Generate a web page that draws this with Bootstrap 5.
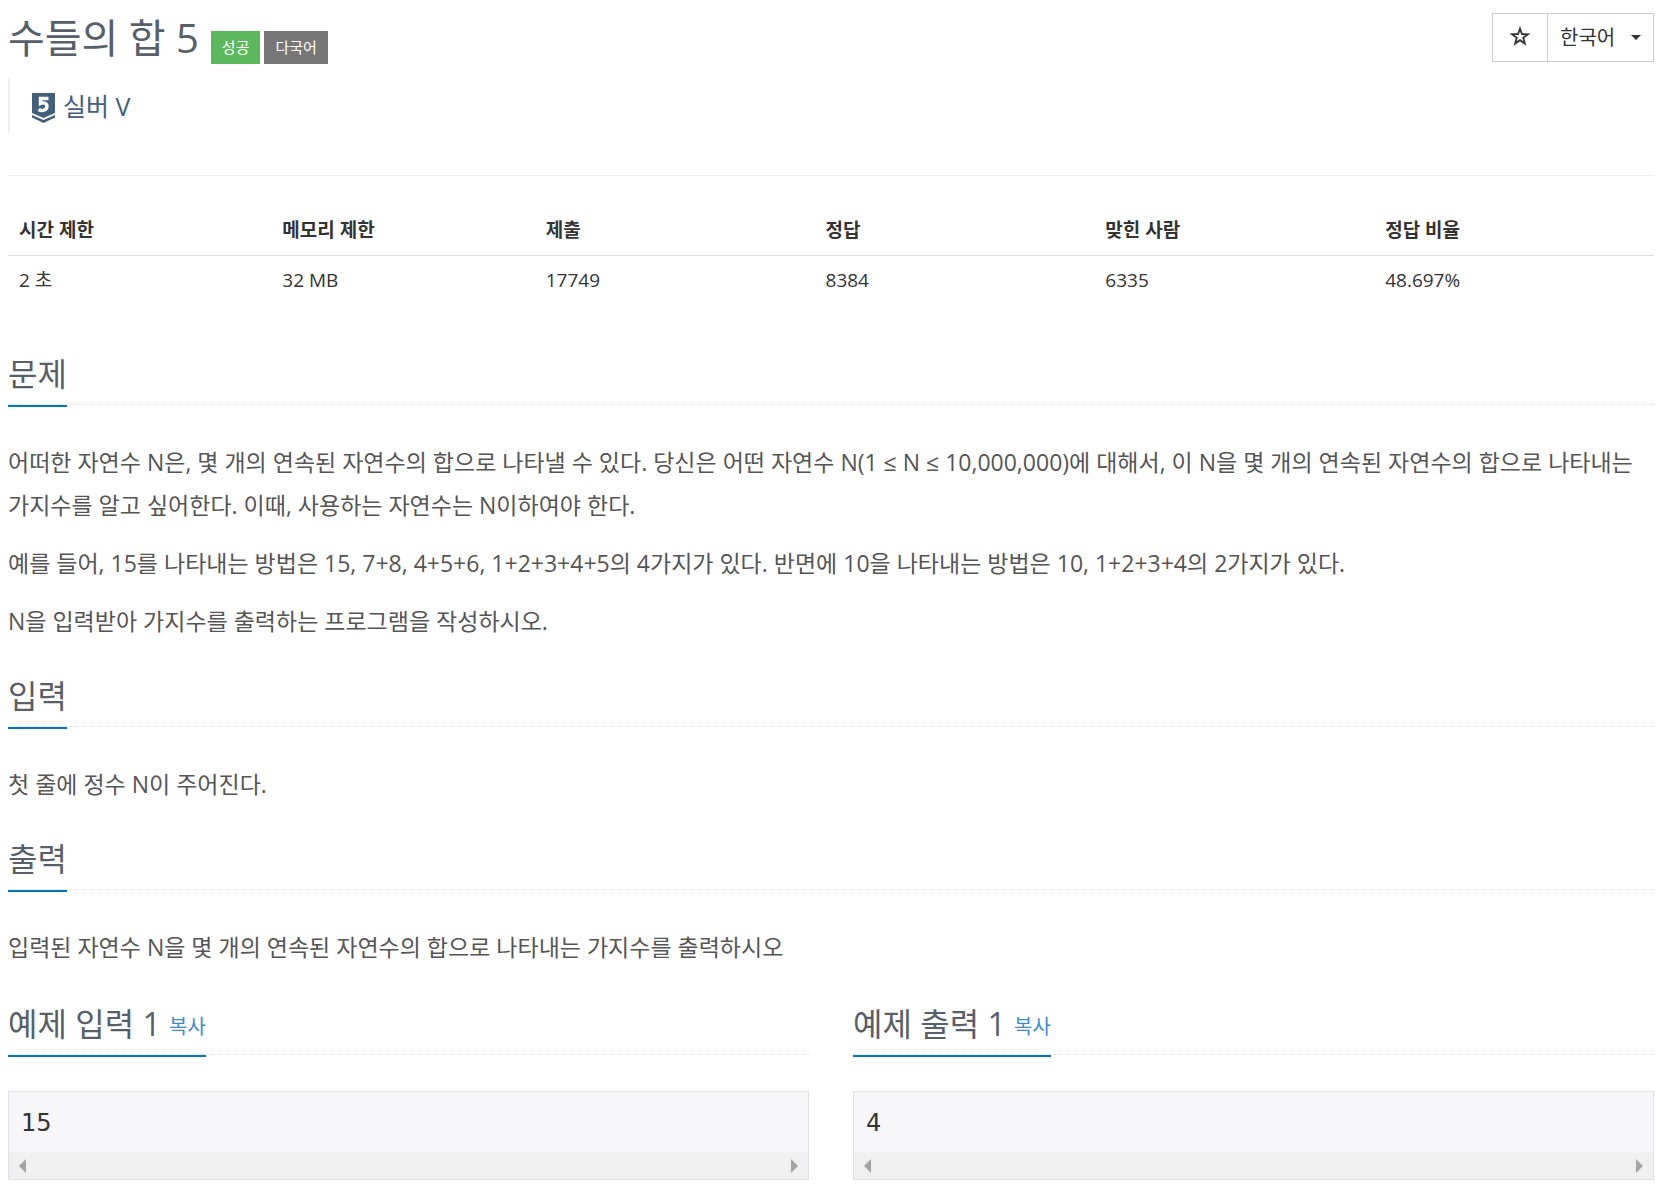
<!DOCTYPE html>
<html lang="ko">
<head>
<meta charset="utf-8">
<meta name="viewport" content="width=device-width, initial-scale=1">
<title>수들의 합 5</title>
<link href="https://cdn.jsdelivr.net/npm/bootstrap@5.3.0/dist/css/bootstrap.min.css" rel="stylesheet">
<style>
  body { font-family: "Open Sans", "Noto Sans CJK KR", sans-serif; font-size: 19px; line-height: 28px; color: #333; background: #fff; }
  .problem-page { padding: 10px 16px 8px 8px; }
  .problem-title { font-size: 40px; line-height: 56px; font-weight: 400; color: #585f69; }
  .label-list { margin: 0 0 2px 12px; }
  .problem-label { font-size: 15px; line-height: 33px; padding: 0 11px; color: #fff; }
  .label-success { background: #5cb85c; }
  .label-lang { background: #777; }
  .tool-group { margin-top: 3px; }
  .tool-btn { height: 49px; border: 1px solid #ccc; border-radius: 0; font-size: 20px; color: #333; padding: 0 12px; }
  .tool-btn:hover, .tool-btn:active { background: #e6e6e6; border-color: #adadad; }
  .lang-btn { width: 107px; }
  .tier-quote { border-left: 2px solid #eee; height: 55px; margin-top: 12px; padding-left: 22px; font-size: 25px; color: #435f7a; }
  .tier-quote a { color: inherit; }
  .title-rule { border-top: 1px solid #eee; opacity: 1; margin: 42px 0 30px; }
  .info-table { table-layout: fixed; color: #333; }
  .info-table th, .info-table td { padding: 11px; line-height: 27px; font-size: 19px; }
  .info-table th { border-bottom: 1px solid #ddd; }
  .info-table td { border: 0; }
  .w-limit { width: 16%; }
  .headline { border-bottom: 1px dotted #dfe3e8; margin-bottom: 36px; }
  .headline h2 { display: inline-block; font-size: 32px; line-height: 42px; font-weight: 400; color: #585f69; margin: 0 0 -3px; padding-bottom: 10px; border-bottom: 2px solid #0076c0; }
  .headline button { font-size: 20px; line-height: 28px; color: #428bca; }
  .problem-text p { font-size: 23px; line-height: 43px; color: #555; margin-bottom: 15px; }
  .problem-section { margin-bottom: 32px; }
  .sample-row { --bs-gutter-x: 44px; padding-top: 2px; }
  .sample-box { border: 1px solid #e0e0e7; background: #f7f7fa; }
  .sample-box pre { font-family: "DejaVu Sans", sans-serif; font-size: 24px; line-height: 32px; color: #333; padding: 15px 12px 13px; margin: 0; }
  .scroll-track { height: 27px; background: #f0f0f0; padding: 0 10px; }
</style>
<script src="https://cdn.jsdelivr.net/npm/bootstrap@5.3.0/dist/js/bootstrap.bundle.min.js"></script>
</head>
<body>
<main class="problem-page">
  <header>
    <div class="d-flex justify-content-between align-items-start">
      <div class="d-flex align-items-end">
        <h1 class="problem-title mb-0">수들의 합 5</h1>
        <div class="label-list d-flex gap-1">
          <span class="problem-label label-success">성공</span>
          <span class="problem-label label-lang">다국어</span>
        </div>
      </div>
      <div class="btn-group tool-group">
        <button type="button" class="btn tool-btn px-3" aria-label="즐겨찾기">
          <svg class="d-block mb-1" width="22" height="22" viewBox="0 0 22 22" fill="none" stroke="#333" stroke-width="1.8"><path d="M11 3.500L12.900 9L19 9.200L14.200 12.800L15.900 18.600L11 15.200L6.100 18.600L7.800 12.800L3 9.200L9.100 9Z"/></svg>
        </button>
        <button type="button" class="btn tool-btn lang-btn d-flex align-items-center justify-content-between" data-bs-toggle="dropdown">
          <span>한국어</span>
          <svg width="10" height="5" viewBox="0 0 10 5"><path d="M0 0H10L5 5Z" fill="#333"/></svg>
        </button>
        <ul class="dropdown-menu dropdown-menu-end"><li><a class="dropdown-item" href="#">한국어</a></li></ul>
      </div>
    </div>
    <div class="tier-quote d-flex align-items-center">
      <svg class="me-2 mt-1" width="23" height="30" viewBox="0 0 23 30"><path d="M0 0H23V20L11.500 25L0 20Z" fill="#435f7a"/><path d="M0 22L11.500 27L23 22V24.500L11.500 30L0 24.500Z" fill="#435f7a"/><path d="M16.500 5.500H8.500V10.500C10.500 9.500 15 9.500 15 13.300C15 17.600 9.500 18.300 6.500 16.500" fill="none" stroke="#fff" stroke-width="3.400"/></svg>
      <a href="#" class="text-decoration-none">실버 V</a>
    </div>
  </header>
  <hr class="title-rule">
  <table class="table info-table mb-0">
    <thead><tr><th class="w-limit">시간 제한</th><th class="w-limit">메모리 제한</th><th>제출</th><th>정답</th><th>맞힌 사람</th><th>정답 비율</th></tr></thead>
    <tbody><tr><td>2 초</td><td>32 MB</td><td>17749</td><td>8384</td><td>6335</td><td>48.697%</td></tr></tbody>
  </table>
  <section class="problem-section mt-5">
    <div class="headline"><h2>문제</h2></div>
    <div class="problem-text">
      <p>어떠한 자연수 N은, 몇 개의 연속된 자연수의 합으로 나타낼 수 있다. 당신은 어떤 자연수 N(1 ≤ N ≤ 10,000,000)에 대해서, 이 N을 몇 개의 연속된 자연수의 합으로 나타내는 가지수를 알고 싶어한다. 이때, 사용하는 자연수는 N이하여야 한다.</p>
      <p>예를 들어, 15를 나타내는 방법은 15, 7+8, 4+5+6, 1+2+3+4+5의 4가지가 있다. 반면에 10을 나타내는 방법은 10, 1+2+3+4의 2가지가 있다.</p>
      <p>N을 입력받아 가지수를 출력하는 프로그램을 작성하시오.</p>
    </div>
  </section>
  <section class="problem-section">
    <div class="headline"><h2>입력</h2></div>
    <div class="problem-text"><p>첫 줄에 정수 N이 주어진다.</p></div>
  </section>
  <section class="problem-section">
    <div class="headline"><h2>출력</h2></div>
    <div class="problem-text"><p>입력된 자연수 N을 몇 개의 연속된 자연수의 합으로 나타내는 가지수를 출력하시오</p></div>
  </section>
  <div class="row sample-row">
    <section class="col-6">
      <div class="headline"><h2>예제 입력 1 <button type="button" class="btn border-0 p-0">복사</button></h2></div>
      <div class="sample-box">
        <pre>15</pre>
        <div class="scroll-track d-flex justify-content-between align-items-center">
          <svg width="7" height="14" viewBox="0 0 7 14"><path d="M7 0V14L0 7Z" fill="#a3a3a3"/></svg>
          <svg width="7" height="14" viewBox="0 0 7 14"><path d="M0 0V14L7 7Z" fill="#a3a3a3"/></svg>
        </div>
      </div>
    </section>
    <section class="col-6">
      <div class="headline"><h2>예제 출력 1 <button type="button" class="btn border-0 p-0">복사</button></h2></div>
      <div class="sample-box">
        <pre>4</pre>
        <div class="scroll-track d-flex justify-content-between align-items-center">
          <svg width="7" height="14" viewBox="0 0 7 14"><path d="M7 0V14L0 7Z" fill="#a3a3a3"/></svg>
          <svg width="7" height="14" viewBox="0 0 7 14"><path d="M0 0V14L7 7Z" fill="#a3a3a3"/></svg>
        </div>
      </div>
    </section>
  </div>
</main>
</body>
</html>
